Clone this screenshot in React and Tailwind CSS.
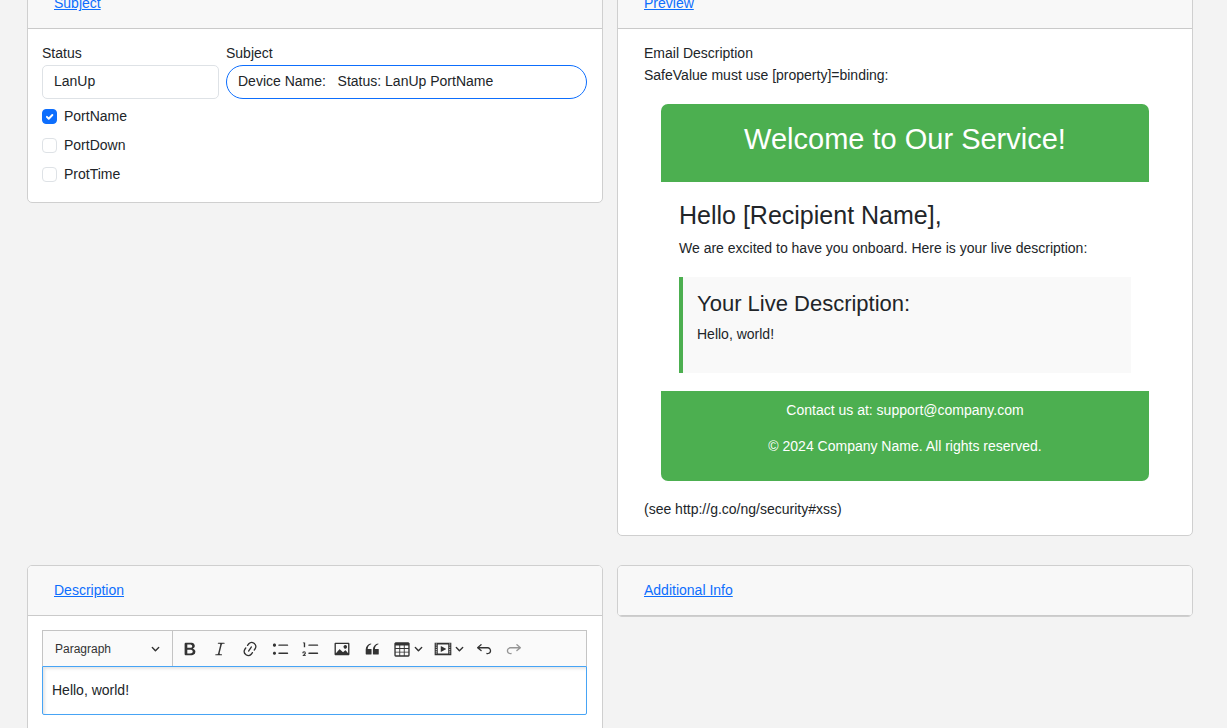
import { useState } from "react";

const icons = {
  bold: "M10.187 17H5.773c-.637 0-1.092-.138-1.364-.415-.273-.277-.409-.718-.409-1.323V4.738c0-.617.14-1.062.419-1.332.279-.27.73-.406 1.354-.406h4.68c.69 0 1.288.041 1.793.124.506.083.96.242 1.36.478.341.197.644.447.906.75a3.262 3.262 0 0 1 .808 2.162c0 1.401-.722 2.426-2.167 3.075C15.05 10.175 16 11.315 16 13.01a3.756 3.756 0 0 1-2.296 3.504 6.1 6.1 0 0 1-1.517.377c-.571.073-1.238.11-2 .11zm-.217-6.217H7v4.087h3.069c1.977 0 2.965-.69 2.965-2.072 0-.707-.256-1.22-.768-1.537-.512-.319-1.277-.478-2.296-.478zM7 5.13v3.619h2.606c.729 0 1.292-.067 1.69-.2a1.6 1.6 0 0 0 .91-.765c.165-.267.247-.566.247-.897 0-.707-.26-1.176-.778-1.409-.519-.232-1.31-.348-2.375-.348H7z",
  italic: "m9.586 14.633.021.004c-.036.335.095.655.393.962.082.083.173.15.274.201h1.474a.6.6 0 1 1 0 1.2H5.304a.6.6 0 0 1 0-1.2h1.15c.474-.07.809-.182 1.005-.334.157-.122.291-.32.404-.597l2.416-9.55a1.053 1.053 0 0 0-.281-.823 1.12 1.12 0 0 0-.442-.296H8.15a.6.6 0 0 1 0-1.2h6.443a.6.6 0 1 1 0 1.2h-1.195c-.376.056-.65.155-.823.296-.215.175-.423.439-.623.79l-2.366 9.347z",
  link: "m11.077 15 .991-1.416a.75.75 0 1 1 1.229.86l-1.148 1.64a.748.748 0 0 1-.217.206 5.251 5.251 0 0 1-8.503-5.955.741.741 0 0 1 .12-.274l1.147-1.639a.75.75 0 1 1 1.228.86L4.933 10.7l.006.003a3.75 3.75 0 0 0 6.132 4.294l.006.004zm5.494-5.335a.748.748 0 0 1-.12.274l-1.147 1.639a.75.75 0 1 1-1.228-.86l.86-1.23a3.75 3.75 0 0 0-6.144-4.301l-.86 1.229a.75.75 0 0 1-1.229-.86l1.148-1.64a.748.748 0 0 1 .217-.206 5.251 5.251 0 0 1 8.503 5.955zm-4.563-2.532a.75.75 0 0 1 .184 1.045l-3.155 4.505a.75.75 0 1 1-1.229-.86l3.155-4.506a.75.75 0 0 1 1.045-.184z",
  bulleted: "M7 5.75c0 .414.336.75.75.75h9.5a.75.75 0 1 0 0-1.5h-9.5a.75.75 0 0 0-.75.75zm-6 0C1 4.784 1.777 4 2.75 4c.966 0 1.75.777 1.75 1.75 0 .966-.777 1.75-1.75 1.75C1.784 7.5 1 6.723 1 5.75zm6 9c0 .414.336.75.75.75h9.5a.75.75 0 1 0 0-1.5h-9.5a.75.75 0 0 0-.75.75zm-6 0c0-.966.777-1.75 1.75-1.75.966 0 1.75.777 1.75 1.75 0 .966-.777 1.75-1.75 1.75-.966 0-1.75-.777-1.75-1.75z",
  numbered: "M7 5.75c0 .414.336.75.75.75h9.5a.75.75 0 1 0 0-1.5h-9.5a.75.75 0 0 0-.75.75zM3.5 3v5H2V3.7H1v-1h2.5V3zM.343 17.857l2.59-3.257H2.92a.6.6 0 1 0-1.04 0H.302a2 2 0 1 1 3.995 0h-.001c-.048.405-.16.734-.333.988-.175.254-.59.692-1.244 1.312H4.3v1h-4l.043-.043zM7 14.75a.75.75 0 0 1 .75-.75h9.5a.75.75 0 1 1 0 1.5h-9.5a.75.75 0 0 1-.75-.75z",
  image: "M6.91 10.54c.26-.23.64-.21.88.03l3.36 3.14 2.23-2.06a.64.64 0 0 1 .87 0l2.52 2.97V4.5H3.2v10.12l3.71-4.08zm10.27-7.51c.6 0 1.09.47 1.09 1.05v11.84c0 .59-.49 1.06-1.09 1.06H2.79c-.6 0-1.09-.47-1.09-1.06V4.08c0-.58.49-1.05 1.1-1.05h14.38zm-5.22 5.56a1.96 1.96 0 1 1 3.4-1.96 1.96 1.96 0 0 1-3.4 1.96z",
  quote: "M3 10.423a6.5 6.5 0 0 1 6.056-6.408l.038.67C6.448 5.423 5.354 7.663 5.22 10H9c.552 0 .5.432.5.986v4.511c0 .554-.448.503-1 .503h-5c-.552 0-.5-.449-.5-1.003v-4.574zm8 0a6.5 6.5 0 0 1 6.056-6.408l.038.67c-2.646.739-3.74 2.979-3.873 5.315H17c.552 0 .5.432.5.986v4.511c0 .554-.448.503-1 .503h-5c-.552 0-.5-.449-.5-1.003v-4.574z",
  table: "M3 6v3h4V6H3zm0 4v3h4v-3H3zm0 4v3h4v-3H3zm5 3h4v-3H8v3zm5 0h4v-3h-4v3zm4-4v-3h-4v3h4zm0-4V6h-4v3h4zm1.5 8a1.5 1.5 0 0 1-1.5 1.5H3A1.5 1.5 0 0 1 1.5 17V4c.222-.863 1.068-1.5 2-1.5h13c.932 0 1.778.637 2 1.5v13zM12 13v-3H8v3h4zm0-4V6H8v3h4z",
  media: "M18.68 3.03c.6 0 .59-.03.59.55v12.84c0 .59.01.56-.59.56H1.29c-.6 0-.59.03-.59-.56V3.58c0-.58-.01-.55.6-.55h17.38zM15.77 15V5H4.2v10h11.57zM2 4v1h1V4H2zm0 2v1h1V6H2zm0 2v1h1V8H2zm0 2v1h1v-1H2zm0 2v1h1v-1H2zm0 2v1h1v-1H2zM17 4v1h1V4h-1zm0 2v1h1V6h-1zm0 2v1h1V8h-1zm0 2v1h1v-1h-1zm0 2v1h1v-1h-1zm0 2v1h1v-1h-1zM7.5 7.177a.4.4 0 0 1 .593-.351l5.133 2.824a.4.4 0 0 1 0 .7l-5.133 2.824a.4.4 0 0 1-.593-.35V7.176v.001z",
  undo: "m5.042 9.367 2.189 1.837a.75.75 0 0 1-.965 1.149l-3.788-3.18a.747.747 0 0 1-.21-.284.75.75 0 0 1 .17-.945L6.23 4.762a.75.75 0 1 1 .964 1.15L4.863 7.866h8.917A.75.75 0 0 1 14 7.9a4 4 0 1 1-1.477 7.718l.344-1.489a2.5 2.5 0 1 0 1.094-4.73l.008-.032H5.042z",
  redo: "m14.958 9.367-2.189 1.837a.75.75 0 0 0 .965 1.149l3.788-3.18a.747.747 0 0 0 .21-.284.75.75 0 0 0-.17-.945L13.77 4.762a.75.75 0 1 0-.964 1.15l2.331 1.955H6.22A.75.75 0 0 0 6 7.9a4 4 0 1 0 1.477 7.718l-.344-1.489A2.5 2.5 0 1 1 6.039 9.4l-.008-.032h8.927z",
};

function Icon({ name }) {
  return (
    <svg viewBox="0 0 20 20" className="size-[18px] shrink-0 fill-current" aria-hidden="true">
      <path d={icons[name]} />
    </svg>
  );
}

function Arrow() {
  return (
    <svg viewBox="0 0 10 10" className="size-[9px] shrink-0 fill-current" aria-hidden="true">
      <path d="M.941 4.523a.75.75 0 1 1 1.06-1.06l3.006 3.005 3.005-3.005a.75.75 0 1 1 1.06 1.06l-3.549 3.55a.75.75 0 0 1-1.168-.136L.941 4.523z" />
    </svg>
  );
}

function ToolButton({ icon, label, disabled }) {
  return (
    <button
      type="button"
      aria-label={label}
      disabled={disabled}
      className="flex h-7 w-7 items-center justify-center rounded-sm disabled:opacity-50"
    >
      <Icon name={icon} />
    </button>
  );
}

function ToolDropdown({ icon, label }) {
  return (
    <button
      type="button"
      aria-label={label}
      aria-haspopup="true"
      className="flex h-7 items-center gap-[3px] rounded-sm pr-1 pl-[5px]"
    >
      <Icon name={icon} />
      <Arrow />
    </button>
  );
}

function Card({ title, children }) {
  return (
    <section className="overflow-hidden rounded-[5px] border border-[#cfcfcf] bg-white">
      <h2 className="border-b border-[#cacaca] bg-[#f8f8f8] px-[26px] py-[14px] leading-[21px]">
        <a href="#" className="text-[#0d6efd] underline">
          {title}
        </a>
      </h2>
      {children}
    </section>
  );
}

function Check({ label, checked, onChange }) {
  return (
    <label className="flex items-center gap-[7px]">
      <span className="grid">
        <input
          type="checkbox"
          checked={checked}
          onChange={onChange}
          className="peer col-start-1 row-start-1 size-[15px] appearance-none rounded-[4px] border border-[#dee2e6] bg-white checked:border-[#0d6efd] checked:bg-[#0d6efd]"
        />
        <svg
          viewBox="0 0 20 20"
          className="pointer-events-none invisible col-start-1 row-start-1 size-[15px] peer-checked:visible"
          aria-hidden="true"
        >
          <path d="m6.5 10.5 2.5 2.5 4.8-5" fill="none" stroke="#fff" strokeWidth="2.6" strokeLinecap="round" strokeLinejoin="round" />
        </svg>
      </span>
      {label}
    </label>
  );
}

function SubjectForm() {
  const [fields, setFields] = useState({ PortName: true, PortDown: false, ProtTime: false });
  const [subject, setSubject] = useState("Device Name:   Status: LanUp PortName");
  return (
    <div className="pt-3.5 pr-[15px] pb-[17px] pl-3.5">
      <div className="grid grid-cols-12 gap-x-[7px]">
        <div className="col-span-4 flex flex-col gap-0.5">
          <label htmlFor="status" className="leading-5">Status</label>
          <select
            id="status"
            className="h-[34px] w-full appearance-none rounded-[5px] border border-[#dee2e6] bg-white px-[11px] pb-0.5"
          >
            <option>LanUp</option>
            <option>LanDown</option>
          </select>
        </div>
        <div className="col-span-8 flex flex-col gap-0.5">
          <label htmlFor="subject" className="leading-5">Subject</label>
          <input
            id="subject"
            type="text"
            value={subject}
            onChange={(e) => setSubject(e.target.value)}
            className="h-[34px] w-full rounded-full border border-[#0d6efd] bg-white px-[11px] pb-0.5 outline-none"
          />
        </div>
      </div>
      <div className="mt-[7px] flex flex-col items-start gap-2 leading-[21px]">
        {Object.keys(fields).map((name) => (
          <Check
            key={name}
            label={name}
            checked={fields[name]}
            onChange={() => setFields({ ...fields, [name]: !fields[name] })}
          />
        ))}
      </div>
    </div>
  );
}

function EmailPreview() {
  return (
    <div className="px-[26px] pt-[13px] pb-[15px] leading-[22px]">
      <p>Email Description</p>
      <p>SafeValue must use [property]=binding:</p>
      <article className="mx-[17px] mt-[18px] mb-[17px]">
        <header className="rounded-t-[7px] bg-[#4caf50] px-[18px] pt-[18px] pb-[26px] text-center text-white">
          <h1 className="text-[29px] leading-[34px]">Welcome to Our Service!</h1>
        </header>
        <div className="p-[18px]">
          <h2 className="mb-[7px] text-[25px] leading-[30px]">Hello [Recipient Name],</h2>
          <p>We are excited to have you onboard. Here is your live description:</p>
          <div className="mt-[18px] border-l-4 border-[#4caf50] bg-[#f9f9f9] px-3.5 pt-3.5 pb-7">
            <h3 className="mb-1.5 text-[22px] leading-[26px]">Your Live Description:</h3>
            <p>Hello, world!</p>
          </div>
        </div>
        <footer className="rounded-b-[7px] bg-[#4caf50] px-[9px] pt-2 pb-6 text-center text-white">
          <p className="mb-3.5">Contact us at: support@company.com</p>
          <p>© 2024 Company Name. All rights reserved.</p>
        </footer>
      </article>
      <p>(see http://g.co/ng/security#xss)</p>
    </div>
  );
}

function Editor() {
  return (
    <div className="pt-3.5 pr-[15px] pb-7 pl-3.5">
      <div className="flex h-9 items-stretch border border-b-0 border-[#c4c4c4] bg-[#fafafa] text-[#333]">
        <button
          type="button"
          aria-haspopup="true"
          className="flex w-[130px] items-center justify-between border-r border-[#c4c4c4] px-3 text-xs"
        >
          Paragraph
          <Arrow />
        </button>
        <div className="flex items-center gap-[3px] pl-[3px]">
          <div className="flex gap-0.5">
            <ToolButton icon="bold" label="Bold" />
            <ToolButton icon="italic" label="Italic" />
            <ToolButton icon="link" label="Link" />
          </div>
          <div className="flex gap-0.5">
            <ToolButton icon="bulleted" label="Bulleted List" />
            <ToolButton icon="numbered" label="Numbered List" />
          </div>
          <div className="flex gap-0.5">
            <ToolButton icon="image" label="Insert image" />
            <ToolButton icon="quote" label="Block quote" />
            <ToolDropdown icon="table" label="Insert table" />
            <ToolDropdown icon="media" label="Insert media" />
            <ToolButton icon="undo" label="Undo" />
            <ToolButton icon="redo" label="Redo" disabled />
          </div>
        </div>
      </div>
      <div
        role="textbox"
        aria-label="Description"
        contentEditable
        suppressContentEditableWarning
        className="rounded-b-[2px] border border-[#47a4f5] px-[9px] py-[13px] leading-[21px] shadow-[inset_2px_2px_3px_rgba(0,0,0,0.1)] outline-none"
      >
        <p>Hello, world!</p>
      </div>
    </div>
  );
}

export default function App() {
  return (
    <main className="h-screen overflow-hidden bg-[#f3f3f3] font-['Liberation_Sans',Arial,sans-serif] text-[14px] text-[#212529]">
      <div className="-mt-[22px] grid grid-cols-2 items-start gap-x-3.5 gap-y-[29px] pr-[34px] pl-[27px]">
        <Card title="Subject">
          <SubjectForm />
        </Card>
        <Card title="Preview">
          <EmailPreview />
        </Card>
        <Card title="Description">
          <Editor />
        </Card>
        <Card title="Additional Info" />
      </div>
    </main>
  );
}
